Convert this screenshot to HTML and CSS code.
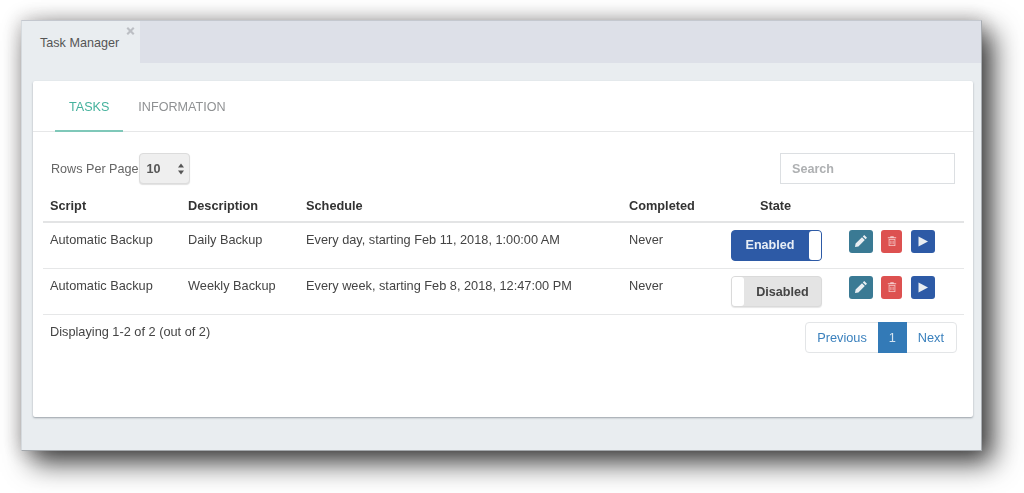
FILE: index.html
```html
<!DOCTYPE html>
<html lang="en">
<head>
<meta charset="utf-8">
<title>Task Manager</title>
<link rel="stylesheet" href="styles.css">
</head>
<body>
<div class="window">
  <div class="tabstrip">
    <div class="apptab">
      <span class="apptab-label">Task Manager</span>
      <svg class="apptab-close" width="9" height="8" viewBox="0 0 9 8"><path d="M0.5 1.500 2 0 4.500 2.500 7 0 8.500 1.500 6 4 8.500 6.500 7 8 4.500 5.500 2 8 0.500 6.500 3 4z"/></svg>
    </div>
  </div>
  <main class="card">
    <nav class="tabs">
      <a class="tab tab-active">TASKS</a>
      <a class="tab">INFORMATION</a>
    </nav>
    <div class="controls">
      <div class="rows">
        <span>Rows Per Page</span>
        <div class="select">
          <span>10</span>
          <svg class="select-arrows" width="6" height="12" viewBox="0 0 6 12"><path d="M3 0.500 6 4.500H0zM3 11.500 0 7.500H6z"/></svg>
        </div>
      </div>
      <div class="search">Search</div>
    </div>
    <table class="tasks">
      <thead>
        <tr>
          <th class="c-script">Script</th>
          <th class="c-desc">Description</th>
          <th class="c-sched">Schedule</th>
          <th class="c-comp">Completed</th>
          <th class="c-state">State</th>
          <th></th>
        </tr>
      </thead>
      <tbody>
        <tr>
          <td>Automatic Backup</td>
          <td>Daily Backup</td>
          <td>Every day, starting Feb 11, 2018, 1:00:00 AM</td>
          <td>Never</td>
          <td>
            <div class="toggle toggle-on"><span class="toggle-text">Enabled</span><span class="knob"></span></div>
          </td>
          <td>
            <div class="actions">
              <button class="act act-edit"><svg width="14" height="14" viewBox="0 0 14 14"><path d="M10.200 1 13 3.800 11.600 5.200 8.800 2.400zM8 3.200 10.800 6 4.400 12.400 1 13 1.600 9.600z"/></svg></button>
              <button class="act act-del"><svg width="10" height="12" viewBox="0 0 12 14"><path d="M4.200 1.200H7.800L8.400 2.600H11V3.800H1V2.600H3.600z"/><path fill-rule="evenodd" d="M2 4.600H10V13H2zM3 5.600V12H9V5.600z"/><path d="M4.200 6.600H5.200V11H4.200zM6.800 6.600H7.800V11H6.800z"/></svg></button>
              <button class="act act-run"><svg width="10" height="11" viewBox="0 0 10 11"><path d="M0.500 0.500 10 5.500 0.500 10.500z"/></svg></button>
            </div>
          </td>
        </tr>
        <tr>
          <td>Automatic Backup</td>
          <td>Weekly Backup</td>
          <td>Every week, starting Feb 8, 2018, 12:47:00 PM</td>
          <td>Never</td>
          <td>
            <div class="toggle toggle-off"><span class="knob"></span><span class="toggle-text">Disabled</span></div>
          </td>
          <td>
            <div class="actions">
              <button class="act act-edit"><svg width="14" height="14" viewBox="0 0 14 14"><path d="M10.200 1 13 3.800 11.600 5.200 8.800 2.400zM8 3.200 10.800 6 4.400 12.400 1 13 1.600 9.600z"/></svg></button>
              <button class="act act-del"><svg width="10" height="12" viewBox="0 0 12 14"><path d="M4.200 1.200H7.800L8.400 2.600H11V3.800H1V2.600H3.600z"/><path fill-rule="evenodd" d="M2 4.600H10V13H2zM3 5.600V12H9V5.600z"/><path d="M4.200 6.600H5.200V11H4.200zM6.800 6.600H7.800V11H6.800z"/></svg></button>
              <button class="act act-run"><svg width="10" height="11" viewBox="0 0 10 11"><path d="M0.500 0.500 10 5.500 0.500 10.500z"/></svg></button>
            </div>
          </td>
        </tr>
      </tbody>
    </table>
    <div class="footer">
      <span class="count">Displaying 1-2 of 2 (out of 2)</span>
      <div class="pager">
        <a class="page">Previous</a>
        <a class="page page-current">1</a>
        <a class="page page-last">Next</a>
      </div>
    </div>
  </main>
</div>
</body>
</html>
```

FILE: styles.css
```css
* {
  box-sizing: border-box;
}

html,
body {
  margin: 0;
  height: 100%;
  background: #fff;
  overflow: hidden;
}

body {
  padding: 20px 42px 42px 21px;
  font-family: "Liberation Sans", Arial, sans-serif;
  font-size: 13px;
  color: #444;
}

.window {
  width: 961px;
  height: 431px;
  background: #e9edf0;
  border-top: 1px solid #c4c8cf;
  border-right: 1px solid #a9adb2;
  border-bottom: 1px solid #a4a8ac;
  border-left: 1px solid #d5dade;
  box-shadow: 11px 12px 26px rgba(0, 0, 0, 0.74), 0 0 18px rgba(70, 60, 60, 0.3);
  filter: blur(0.35px);
}

.tabstrip {
  height: 42px;
  background: #dde0e8;
  display: flex;
}

.apptab {
  width: 118px;
  background: #e9edf0;
  padding: 15px 0 0 18px;
  position: relative;
  font-size: 12.6px;
  color: #555;
}

.apptab-close {
  position: absolute;
  top: 6px;
  right: 5px;
  fill: #bcbfc4;
}

.card {
  width: 940px;
  height: 336px;
  margin: 18px 0 0 11px;
  background: #fff;
  border-radius: 2px;
  box-shadow: 0 1px 2px rgba(90, 100, 110, 0.55);
  display: flex;
  flex-direction: column;
}

.tabs {
  height: 51px;
  padding: 0 22px;
  display: flex;
  border-bottom: 1px solid #e6e7e8;
  flex: none;
}

.tab {
  padding: 19px 14px 0;
  font-size: 12.6px;
  color: #8f9193;
  height: 50px;
}

.tab-active {
  color: #45b29d;
  border-bottom: 2px solid #7fc8b9;
  margin-right: 1px;
  height: 51px;
}

.controls {
  display: flex;
  justify-content: space-between;
  align-items: center;
  padding: 21px 18px 0 18px;
  height: 52px;
  flex: none;
}

.rows {
  display: flex;
  align-items: center;
  font-size: 12.6px;
  color: #666;
}

.select {
  width: 51px;
  height: 31px;
  display: flex;
  align-items: center;
  justify-content: space-between;
  padding: 0 5px 0 7px;
  background: #efefef;
  border: 1px solid #dcdcdc;
  border-radius: 4px;
  box-shadow: 0 1px 1px rgba(0, 0, 0, 0.12);
  font-weight: 700;
  font-size: 12.6px;
  color: #555;
}

.select-arrows {
  fill: #555;
}

.search {
  width: 175px;
  height: 31px;
  border: 1px solid #dcdfe2;
  padding: 8px 11px;
  font-size: 12.6px;
  font-weight: 700;
  color: #aeb0b2;
}

.tasks {
  width: 921px;
  margin-left: 10px;
  flex: none;
  border-collapse: collapse;
  table-layout: fixed;
  font-size: 12.75px;
}

.tasks th {
  height: 38px;
  text-align: left;
  font-weight: 700;
  color: #333;
  padding: 6px 0 0 7px;
  border-bottom: 2px solid #e3e4e5;
}

.tasks td {
  height: 46px;
  padding: 0 0 12px 7px;
  border-bottom: 1px solid #e6e7e8;
  color: #444;
  vertical-align: middle;
}

.c-script {
  width: 138px;
}

.c-desc {
  width: 118px;
}

.c-sched {
  width: 323px;
}

.c-comp {
  width: 95px;
}

.c-state {
  width: 124px;
}

.tasks th.c-state {
  padding-left: 43px;
}

.tasks td:nth-child(5) {
  padding: 0 0 0 14px;
}

.tasks td:nth-child(6) {
  padding: 0 0 8px 8px;
}

.toggle {
  width: 91px;
  height: 31px;
  border-radius: 4px;
  display: flex;
  align-items: center;
  font-weight: 700;
  font-size: 12.6px;
}

.toggle-on {
  background: #2d5aa6;
  color: #e8eef6;
  border: 1px solid #2d5aa6;
}

.toggle-on .toggle-text {
  flex: 1;
  text-align: center;
  padding-left: 5px;
  padding-right: 6px;
}

.toggle-off {
  background: #e4e4e4;
  color: #444;
  border: 1px solid #dadada;
  box-shadow: 0 1px 1px rgba(0, 0, 0, 0.1);
}

.toggle-off .toggle-text {
  flex: 1;
  text-align: center;
  padding-top: 2px;
}

.knob {
  width: 12px;
  height: 29px;
  background: #fff;
  border-radius: 3px;
  flex: none;
}

.actions {
  display: flex;
  gap: 8px;
}

.act {
  width: 24px;
  height: 23px;
  padding: 0;
  border: 0;
  border-radius: 3px;
  display: flex;
  align-items: center;
  justify-content: center;
  fill: #e9eef2;
}

.act-edit {
  background: #3a7a94;
}

.act-del {
  width: 21px;
  background: #dd5150;
}

.act-del svg {
  fill: #f5c9c8;
}

.act-run {
  margin-left: 1px;
  background: #2d5aa6;
}

.footer {
  display: flex;
  justify-content: space-between;
  padding: 7px 16px 0 17px;
  flex: none;
}

.count {
  font-size: 12.75px;
  color: #444;
  padding-top: 2px;
}

.pager {
  display: flex;
  height: 31px;
  border: 1px solid #e3e5e7;
  border-radius: 4px;
  font-size: 12.75px;
  color: #3a80bd;
  line-height: 29px;
}

.page {
  padding: 0 11px;
}

.page-last {
  padding-right: 12px;
}

.page-current {
  background: #337ab7;
  color: #d6e4f0;
  width: 29px;
  padding: 0;
  text-align: center;
  height: 31px;
  margin-top: -1px;
  line-height: 31px;
}
```
